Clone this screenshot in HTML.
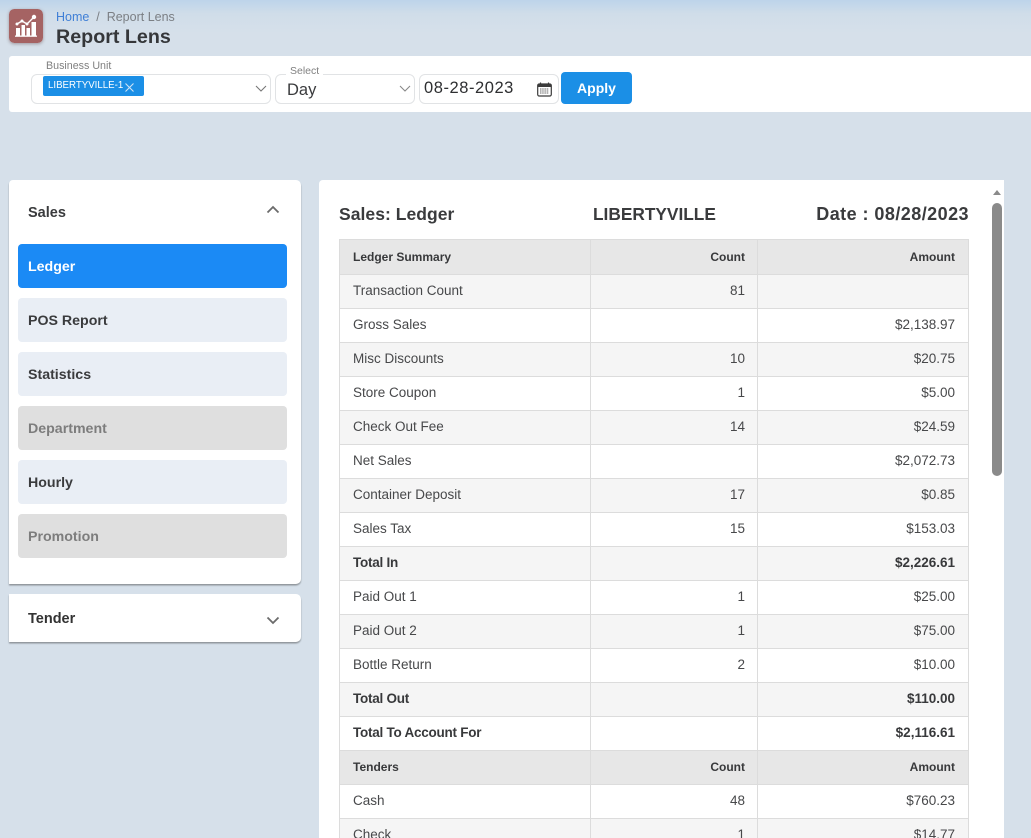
<!DOCTYPE html>
<html><head><meta charset="utf-8">
<style>
*{box-sizing:border-box}
html,body{margin:0;padding:0;width:1031px;height:838px;overflow:hidden;background:#d6e0ea;font-family:"Liberation Sans",sans-serif;color:#3a3b3d}
#root{position:relative;width:1031px;height:838px;overflow:hidden;background:#d6e0ea}
.a{position:absolute;white-space:nowrap}
#top{left:0;top:0;width:1031px;height:56px;background:linear-gradient(#bdd4ea 0,#d0dde9 14px,#d6e0ea 34px)}
.box{position:absolute;border:1px solid #e1e3e5;border-radius:6px;background:#fff}
.item{position:absolute;left:18px;width:269px;height:44px;border-radius:4px;background:#e9eef5;font-weight:bold;font-size:14.2px;line-height:46px;padding-left:10px;color:#3a3b3d}
.item.dis{background:#dfdfdf;color:#7d7d7d}
table{position:absolute;left:339px;top:239px;width:629px;border-collapse:collapse;table-layout:fixed;font-size:13.5px;color:#47484a}
td{border:1px solid #dcdcdc;height:34px;padding:0 13px 2px;white-space:nowrap;overflow:hidden}
td:nth-child(2){text-align:right;padding-right:12px}
td:nth-child(3){text-align:right}
tr.h td{background:#e7e7e7;font-weight:bold;font-size:12px;color:#38393b}
tr.s td{background:#f5f5f5}
tr.b td{font-weight:bold;color:#38393b}
tr.b td:first-child{letter-spacing:-.25px}
tr.first td{padding-bottom:0}
</style></head><body>
<div id="root">
<div class="a" id="top"></div>
<svg class="a" style="left:9px;top:9px;border-radius:5px;box-shadow:0 1px 3px rgba(90,60,60,.45)" width="34" height="34" viewBox="0 0 34 34">
<rect width="34" height="34" rx="5" fill="#a56363"/>
<path d="M8 15 L13 12 L18 15 L25 8" stroke="#fff" stroke-width="1.400" fill="none"/>
<circle cx="8" cy="15" r="1.500" fill="#fff"/><circle cx="13" cy="12" r="1.500" fill="#fff"/><circle cx="18" cy="15" r="1.500" fill="#fff"/><circle cx="25" cy="8" r="2.200" fill="#fff"/>
<path d="M7 19h4v8H7zM12.500 16h3.500v11h-3.500zM17.500 19h3.500v8h-3.500zM22.500 13h4.500v14h-4.500z" fill="#fff"/>
<rect x="6" y="26.500" width="22" height="1.300" fill="#fff"/>
</svg>
<div class="a" style="left:56px;top:9px;font-size:12.500px;line-height:16px;color:#7b7f84"><span style="color:#3f7fd6">Home</span>&nbsp;&nbsp;/&nbsp;&nbsp;Report Lens</div>
<div class="a" style="left:56px;top:25px;font-size:19.700px;line-height:24px;font-weight:bold;color:#35373a">Report Lens</div>

<div class="a" style="left:9px;top:56px;width:1022px;height:56px;background:#fff;border-radius:3px 0 0 3px"></div>

<div class="box" style="left:31px;top:74px;width:240px;height:30px"></div>
<div class="a" style="left:42px;top:60px;background:#fff;padding:0 4px;font-size:10.700px;line-height:13px;color:#808080">Business Unit</div>
<div class="a" style="left:43px;top:76px;width:101px;height:20px;background:#1b8fe6;border-radius:2px;color:#fff;font-size:9.700px;line-height:20px;padding-left:5px">LIBERTYVILLE-1</div>
<svg class="a" style="left:124px;top:82px" width="11" height="11" viewBox="0 0 11 11"><path d="M1.500 1.500l8 8M9.500 1.500l-8 8" stroke="#cfe3f5" stroke-width="1.100" fill="none"/></svg>
<svg class="a" style="left:255px;top:84px" width="12" height="9" viewBox="0 0 12 9"><path d="M1 2l5 5 5-5" stroke="#777" stroke-width="1.100" fill="none"/></svg>

<div class="box" style="left:275px;top:74px;width:140px;height:30px"></div>
<div class="a" style="left:286px;top:65px;background:#fff;padding:0 4px;font-size:10.500px;line-height:13px;color:#808080">Select</div>
<div class="a" style="left:287px;top:81px;font-size:16.500px;line-height:19px;color:#3a3b3d">Day</div>
<svg class="a" style="left:399px;top:84px" width="12" height="9" viewBox="0 0 12 9"><path d="M1 2l5 5 5-5" stroke="#888" stroke-width="1.100" fill="none"/></svg>

<div class="box" style="left:419px;top:74px;width:140px;height:30px"></div>
<div class="a" style="left:424px;top:79px;font-size:16.500px;line-height:19px;letter-spacing:.55px;color:#2e2f31">08-28-2023</div>
<svg class="a" style="left:537px;top:82px" width="15" height="15" viewBox="0 0 15 15"><rect x=".7" y="2" width="13.600" height="12" rx="1.500" fill="#fff" stroke="#3b3b3b" stroke-width="1.200"/><rect x="1" y="2.500" width="13" height="2.500" fill="#3b3b3b"/><path d="M3.500 .5v3M11.500 .5v3" stroke="#3b3b3b" stroke-width="1.200"/><path d="M3 7h9M3 9h9M3 11h9" stroke="#666" stroke-width="1" stroke-dasharray="1.500 .7"/></svg>
<div class="a" style="left:561px;top:72px;width:71px;height:32px;background:#1b8fe6;border-radius:4px;color:#fff;font-weight:bold;font-size:14px;line-height:32px;text-align:center">Apply</div>

<!-- Accordion -->
<div class="a" style="left:9px;top:180px;width:292px;height:404px;background:#fff;border-radius:0 5px 5px 0;border-top-left-radius:4px;box-shadow:0 1.500px 1.500px #8e949a"></div>
<div class="a" style="left:28px;top:204px;font-size:14.500px;line-height:18px;font-weight:bold;color:#3a3b3d">Sales</div>
<svg class="a" style="left:266px;top:204px" width="14" height="11" viewBox="0 0 14 11"><path d="M1.500 8.500L7 3l5.500 5.500" stroke="#6b6b6b" stroke-width="1.800" fill="none"/></svg>
<div class="item" style="top:244px;background:#1b8af5;color:#fff">Ledger</div>
<div class="item" style="top:298px">POS Report</div>
<div class="item" style="top:352px">Statistics</div>
<div class="item dis" style="top:406px">Department</div>
<div class="item" style="top:460px">Hourly</div>
<div class="item dis" style="top:514px">Promotion</div>

<div class="a" style="left:9px;top:594px;width:292px;height:48px;background:#fff;border-radius:0 5px 5px 0;box-shadow:0 1.500px 1.500px #8e949a"></div>
<div class="a" style="left:28px;top:610px;font-size:14.500px;line-height:18px;font-weight:bold;color:#333">Tender</div>
<svg class="a" style="left:266px;top:615px" width="14" height="11" viewBox="0 0 14 11"><path d="M1.500 2.500L7 8l5.500-5.500" stroke="#6b6b6b" stroke-width="1.800" fill="none"/></svg>

<!-- Report panel -->
<div class="a" style="left:319px;top:180px;width:685px;height:658px;background:#fff;border-radius:4px 0 0 0"></div>
<div class="a" style="left:339px;top:204px;font-size:17.500px;line-height:20px;font-weight:bold;letter-spacing:.05px;color:#3a3b3d">Sales: Ledger</div>
<div class="a" style="left:593px;top:204px;font-size:17.300px;line-height:20px;font-weight:bold;color:#3a3b3d">LIBERTYVILLE</div>
<div class="a" style="left:700px;width:269px;text-align:right;top:204px;font-size:18px;line-height:20px;font-weight:bold;letter-spacing:.45px;color:#3a3b3d">Date : 08/28/2023</div>

<svg class="a" style="left:992px;top:189px" width="10" height="7" viewBox="0 0 10 7"><path d="M1 6l4-5 4 5z" fill="#8a8a8a"/></svg>
<div class="a" style="left:992px;top:203px;width:10px;height:273px;background:#8a8a8a;border-radius:5px"></div>

<table>
<colgroup><col style="width:251px"><col style="width:167px"><col style="width:211px"></colgroup>
<tr class="h first" style="height:35px"><td style="height:35px">Ledger Summary</td><td>Count</td><td>Amount</td></tr>
<tr class="s"><td>Transaction Count</td><td>81</td><td></td></tr>
<tr><td>Gross Sales</td><td></td><td>$2,138.97</td></tr>
<tr class="s"><td>Misc Discounts</td><td>10</td><td>$20.75</td></tr>
<tr><td>Store Coupon</td><td>1</td><td>$5.00</td></tr>
<tr class="s"><td>Check Out Fee</td><td>14</td><td>$24.59</td></tr>
<tr><td>Net Sales</td><td></td><td>$2,072.73</td></tr>
<tr class="s"><td>Container Deposit</td><td>17</td><td>$0.85</td></tr>
<tr><td>Sales Tax</td><td>15</td><td>$153.03</td></tr>
<tr class="s b"><td>Total In</td><td></td><td>$2,226.61</td></tr>
<tr><td>Paid Out 1</td><td>1</td><td>$25.00</td></tr>
<tr class="s"><td>Paid Out 2</td><td>1</td><td>$75.00</td></tr>
<tr><td>Bottle Return</td><td>2</td><td>$10.00</td></tr>
<tr class="s b"><td>Total Out</td><td></td><td>$110.00</td></tr>
<tr class="b"><td>Total To Account For</td><td></td><td>$2,116.61</td></tr>
<tr class="h"><td>Tenders</td><td>Count</td><td>Amount</td></tr>
<tr><td>Cash</td><td>48</td><td>$760.23</td></tr>
<tr class="s"><td>Check</td><td>1</td><td>$14.77</td></tr>
</table>
</div>
</body></html>
